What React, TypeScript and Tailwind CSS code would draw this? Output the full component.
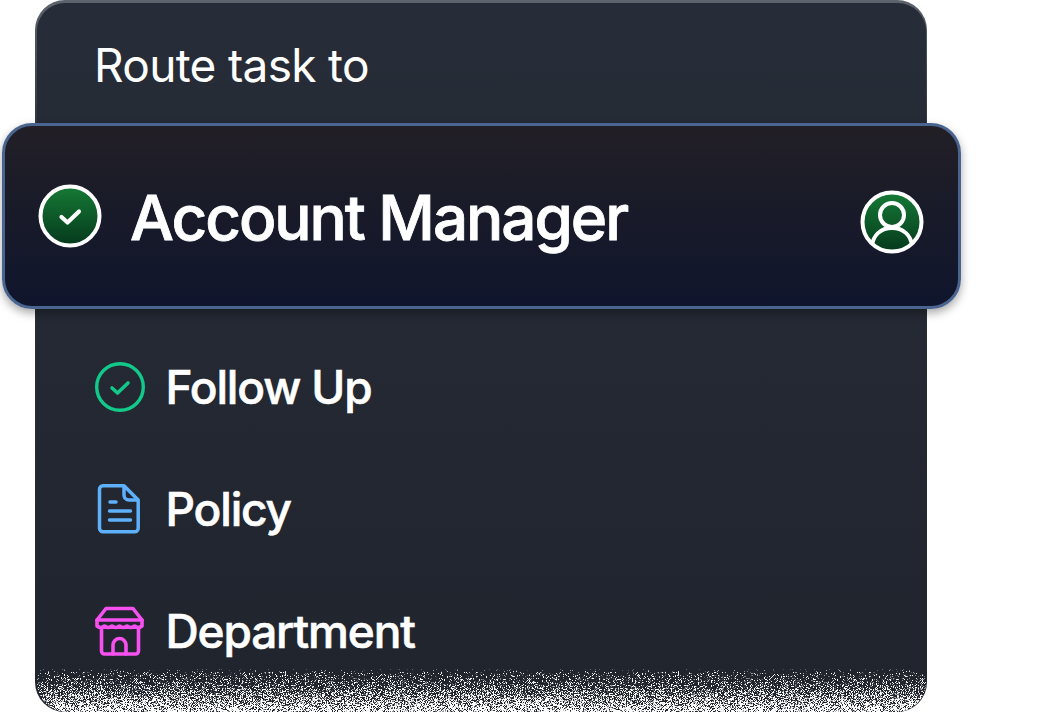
import React from "react";

const font = { fontFamily: "Inter, 'Liberation Sans', sans-serif" };

function GreenCheck() {
  return (
    <svg width="64" height="64" viewBox="0 0 64 64" fill="none" className="shrink-0">
      <defs>
        <linearGradient id="g1" x1="0" y1="0" x2="0" y2="1">
          <stop offset="0" stopColor="#167a36" />
          <stop offset="1" stopColor="#05391c" />
        </linearGradient>
      </defs>
      <circle cx="32" cy="32" r="29.5" fill="url(#g1)" stroke="#fff" strokeWidth="4" />
      <path d="M23.5 33l6 5.5L41 27.500" stroke="#fff" strokeWidth="4.2" strokeLinecap="round" strokeLinejoin="round" />
    </svg>
  );
}

function GreenUser() {
  return (
    <svg width="64" height="64" viewBox="0 0 64 64" fill="none" className="shrink-0">
      <defs>
        <linearGradient id="g2" x1="0" y1="0" x2="0" y2="1">
          <stop offset="0" stopColor="#167a36" />
          <stop offset="1" stopColor="#05391c" />
        </linearGradient>
        <clipPath id="c2"><circle cx="32" cy="32" r="29" /></clipPath>
      </defs>
      <circle cx="32" cy="32" r="29.500" fill="url(#g2)" stroke="#fff" strokeWidth="4" />
      <circle cx="32" cy="25" r="12" stroke="#fff" strokeWidth="4" />
      <path d="M12 56c1-11 9-18 20-18s19 7 20 18" stroke="#fff" strokeWidth="4" clipPath="url(#c2)" />
    </svg>
  );
}

function CheckIcon() {
  return (
    <svg width="50" height="50" viewBox="0 0 50 50" fill="none" className="-mt-[2px] shrink-0">
      <circle cx="25" cy="25" r="23.300" stroke="#12c98a" strokeWidth="3.400" />
      <path d="M17 26l5.500 5 10.500-10" stroke="#12c98a" strokeWidth="3.600" strokeLinecap="round" strokeLinejoin="round" />
    </svg>
  );
}

function DocIcon() {
  return (
    <svg width="50" height="50" viewBox="0 0 50 50" fill="none" className="-mt-[2px] shrink-0">
      <path d="M8 1.800h21L43.200 16v28.200a3.500 3.500 0 0 1-3.500 3.500H8a3.500 3.500 0 0 1-3.500-3.500V5.300A3.500 3.500 0 0 1 8 1.800z" stroke="#5fb0fa" strokeWidth="3.500" strokeLinejoin="round" />
      <path d="M29 2v9a5 5 0 0 0 5 5h9" stroke="#5fb0fa" strokeWidth="3.500" strokeLinejoin="round" />
      <path d="M15 18h6M14.500 27h21M14.500 36h21" stroke="#5fb0fa" strokeWidth="3.500" strokeLinecap="round" />
    </svg>
  );
}

function StoreIcon() {
  return (
    <svg width="50" height="50" viewBox="0 0 50 50" fill="none" className="-mt-[2px] shrink-0">
      <g stroke="#f651f0" strokeWidth="3.600" strokeLinejoin="round" strokeLinecap="round">
        <path d="M2 14L11 2.500h27L47 14" />
        <path d="M2 14H47V20q-3.750 3-7.500 0q-3.750 3-7.500 0q-3.750 3-7.500 0q-3.750 3-7.500 0q-3.750 3-7.500 0q-3.750 3-7.500 0z" />
        <path d="M6.500 22v23a3 3 0 0 0 3 3h31a3 3 0 0 0 3-3V22" />
        <path d="M18 48V39a6.500 6.500 0 0 1 13 0v9" />
      </g>
    </svg>
  );
}

function Row({ icon, label }: { icon: React.ReactNode; label: string }) {
  return (
    <div className="flex h-[122px] items-center gap-[21px] text-[46px] font-medium tracking-[-0.025em] text-white [-webkit-text-stroke:0.6px_#fff]">
      {icon}
      <span>{label}</span>
    </div>
  );
}

function Noise() {
  return (
    <svg className="absolute bottom-0 left-0 h-[44px] w-full" width="891" height="44" viewBox="0 0 891 44">
      <defs>
        <filter id="n" x="0" y="0" width="100%" height="100%" colorInterpolationFilters="sRGB">
          <feTurbulence type="fractalNoise" baseFrequency="1.300" numOctaves="1" seed="7" result="t" />
          <feColorMatrix in="t" values="1.800 1.800 0 0 -1.300  1.800 1.800 0 0 -1.300  1.800 1.800 0 0 -1.300  0 0 0 0 1" result="g" />
          <feComposite in="g" in2="SourceGraphic" operator="arithmetic" k1="0" k2="1" k3="1" k4="-1" result="s" />
          <feColorMatrix in="s" values="0 0 0 0 1  0 0 0 0 1  0 0 0 0 1  5 0 0 0 -0.1" />
        </filter>
        <linearGradient id="fade" x1="0" y1="0" x2="0" y2="1">
          <stop offset="0" stopColor="#000" />
          <stop offset="0.12" stopColor="#4a4a4a" />
          <stop offset="1" stopColor="#c8c8c8" />
        </linearGradient>
      </defs>
      <rect width="891" height="44" fill="url(#fade)" filter="url(#n)" />
    </svg>
  );
}

export default function App() {
  return (
    <div className="h-[712px] w-[1043px] overflow-hidden bg-white" style={font}>
      <div className="relative ml-[35px] h-[712px] w-[892px]">
        <div className="h-full w-full rounded-[30px] bg-gradient-to-b from-[#5d636d] via-[#2a2f39] via-[20%] to-[#21252f] px-[1.5px] pt-[2.5px]">
          <div className="relative h-full w-full overflow-hidden rounded-t-[28px] rounded-b-[30px] bg-gradient-to-b from-[#272d38] to-[#20242d]">
            <div className="flex h-[121px] items-start pl-[57.5px] pt-[34px] text-[46px] font-normal leading-[56px] tracking-[-0.015em] text-white">
              Route task to
            </div>
            <div className="h-[203px]" />
            <div className="flex flex-col pl-[58px]">
              <Row icon={<CheckIcon />} label="Follow Up" />
              <Row icon={<DocIcon />} label="Policy" />
              <Row icon={<StoreIcon />} label="Department" />
            </div>
            <Noise />
          </div>
        </div>
        <div className="absolute left-[-33px] top-[123px] flex h-[186px] w-[959px] items-center rounded-[30px] border-[3px] border-[#4a6490] bg-gradient-to-b from-[#221f26] to-[#0f152c] pl-[33px] pr-[34px] shadow-[0_4px_10px_rgba(0,0,0,0.35)]">
          <div className="mt-[0px]"><GreenCheck /></div>
          <span className="ml-[28px] mt-[4px] flex-1 text-[62px] font-medium leading-[70px] tracking-[-0.033em] text-white [-webkit-text-stroke:0.8px_#fff]">Account Manager</span>
          <div className="mt-[11px]"><GreenUser /></div>
        </div>
      </div>
    </div>
  );
}
